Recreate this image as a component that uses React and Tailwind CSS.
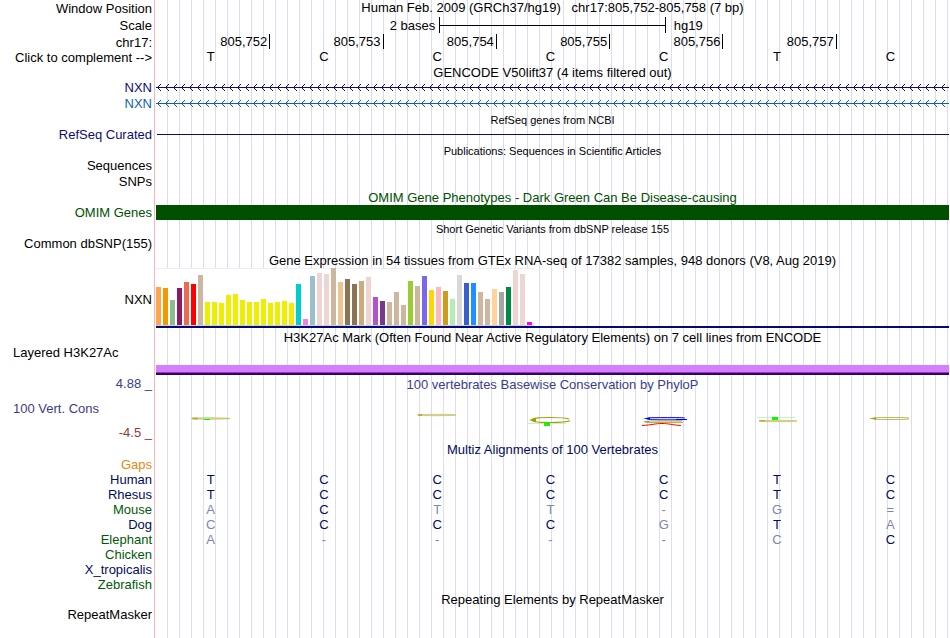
import React from 'react'
import clsx from 'clsx'

const positions = ['805,752', '805,753', '805,754', '805,755', '805,756', '805,757']
const sequence = ['T', 'C', 'C', 'C', 'C', 'T', 'C']

// median expression per tissue: bar height in px and tissue colour
const tissues = [
  [38, '#ffa54f'], [37, '#ee9a00'], [25, '#8fbc8f'], [37, '#8b1c62'], [43, '#ee6a50'], [41, '#ff0000'],
  [50, '#cdb79e'], [23, '#eeee00'], [23, '#eeee00'], [22, '#eeee00'], [30, '#eeee00'], [31, '#eeee00'],
  [25, '#eeee00'], [23, '#eeee00'], [23, '#eeee00'], [26, '#eeee00'], [22, '#eeee00'], [23, '#eeee00'],
  [24, '#eeee00'], [22, '#eeee00'], [41, '#00cdcd'], [6, '#ee82ee'], [49, '#9ac0cd'], [52, '#eed5d2'],
  [51, '#eed5d2'], [57, '#cdb79e'], [43, '#eec591'], [46, '#8b7355'], [41, '#8b7355'], [44, '#cdaa7d'],
  [48, '#eed5d2'], [28, '#b452cd'], [24, '#7a378b'], [23, '#cdb79e'], [33, '#cdb79e'], [20, '#cdb79e'],
  [44, '#9acd32'], [39, '#cdb79e'], [49, '#7a67ee'], [35, '#ffd700'], [38, '#ffb6c1'], [34, '#cd9b1d'],
  [26, '#b4eeb4'], [50, '#d9d9d9'], [42, '#3a5fcd'], [42, '#1e90ff'], [33, '#cdb79e'], [26, '#cdb79e'],
  [36, '#ffd39b'], [33, '#a6a6a6'], [38, '#008b45'], [55, '#eed5d2'], [51, '#eed5d2'], [3, '#ff00ff'],
]

const species = [
  { name: 'Gaps', color: 'text-[#e08a10]', bases: '' },
  { name: 'Human', color: 'text-[#000a64]', bases: 'TCCCCTC' },
  { name: 'Rhesus', color: 'text-[#000a64]', bases: 'TCCCCTC' },
  { name: 'Mouse', color: 'text-[#005a0a]', bases: 'ACTT-G=' },
  { name: 'Dog', color: 'text-[#000a64]', bases: 'CCCCGTA' },
  { name: 'Elephant', color: 'text-[#005a0a]', bases: 'A----CC' },
  { name: 'Chicken', color: 'text-[#005a0a]', bases: '' },
  { name: 'X_tropicalis', color: 'text-[#000a64]', bases: '' },
  { name: 'Zebrafish', color: 'text-[#005a0a]', bases: '' },
]

const Row = ({ label, labelClass, className, children }) => (
  <div className={clsx('grid grid-cols-[156px_minmax(0,1fr)]', className)}>
    <div className={clsx('pr-1 text-right', labelClass)}>{label}</div>
    {children}
  </div>
)

const Title = ({ className, children }) => (
  <h2 className={clsx('ml-[156px] whitespace-pre text-center leading-[14px]', className)}>{children}</h2>
)

const GeneLine = ({ id, color }) => (
  <svg className="h-4 w-full" aria-hidden="true" shapeRendering="crispEdges">
    <defs>
      <pattern id={id} width="8" height="16" patternUnits="userSpaceOnUse">
        <path d="M1 7h1v1h-1zM2 6h1v1h-1zM2 8h1v1h-1zM3 5h1v1h-1zM3 9h1v1h-1zM4 4h1v1h-1zM4 10h1v1h-1z" fill={color} />
      </pattern>
    </defs>
    <rect width="100%" height="16" fill={`url(#${id})`} />
    <rect y="7" width="100%" height="1" fill={color} />
  </svg>
)

// flattened letter stacks of the conservation logo, one per base
const logos = [
  <>
    <ellipse cx="24" cy="10.5" rx="19" ry="0.7" fill="#e6e4a8" stroke="#b4b03c" strokeWidth="0.6" />
    <path d="M4 10.5l2-1h5v2H6z" fill="#b4b03c" />
    <rect x="17" y="11" width="6" height="1" fill="#00ff00" />
  </>,
  null,
  <>
    <ellipse cx="24" cy="7" rx="19" ry="0.7" fill="#e6e4a8" stroke="#b8b448" strokeWidth="0.6" />
    <path d="M4 7l2-1h3v2H6z" fill="#b4b03c" />
  </>,
  <>
    <path d="M43 11C39 9.600 32 9.500 24 9.500S6 9.500 6 12s10 2.500 18 2.500 16 0 20-1.700" fill="none" stroke="#a0a000" strokeWidth="1.200" />
    <path d="M3 12l7-2.200v4.400z" fill="#a0a000" />
    <path d="M2 15.500h38" stroke="#a0f5a0" strokeWidth="0.700" />
    <rect x="18" y="15" width="6" height="3" fill="#00ff00" />
  </>,
  <>
    <path d="M44 9.500H10L4 10.500l6 1.300h34z" fill="#d4d4ff" />
    <path d="M45 10C41 9.300 34 9.500 24 9.500S7 9.500 7 10.500s9 1.300 17 1.300h19" fill="none" stroke="#0000ff" strokeWidth="0.900" />
    <path d="M3 10.500l7-1v2.200zM36 11h11v1H36z" fill="#0000ff" />
    <path d="M42 13H10l-5 .700 5 .900h33" fill="none" stroke="#a8a420" strokeWidth="0.900" />
    <path d="M3 13h6v1.400H6z" fill="#a8a420" />
    <path d="M2 17.500C12 17 15 15.500 22 15.500s10 1.500 19 2" fill="none" stroke="#ff0000" strokeWidth="1" />
  </>,
  <>
    <path d="M4 9.500h38" stroke="#a0f5a0" strokeWidth="0.700" />
    <rect x="19" y="9" width="6" height="3" fill="#00ff00" />
    <ellipse cx="25" cy="13" rx="19" ry="0.700" fill="#e6e4a8" stroke="#b8b448" strokeWidth="0.600" />
    <path d="M6 12h6v1.600H7z" fill="#b4b03c" />
  </>,
  <>
    <path d="M43 10C38 9.300 32 9.500 24 9.500S8 9.500 8 10.500s8 1 16 1 15 0 19-.500" fill="none" stroke="#aaa62c" strokeWidth="0.800" />
    <path d="M3 10.500l7-1.200v2.400z" fill="#a0a000" />
  </>,
]

export default function App() {
  return (
    <main
      className="grid min-h-screen grid-cols-[156px_minmax(0,1fr)] bg-white pr-px text-[13px] leading-[15px] text-black"
      style={{ fontFamily: '"Liberation Sans", Arial, sans-serif' }}
    >
      {/* page guides behind every track */}
      <div className="col-start-1 row-start-1 mr-px border-r border-[#ffb4b4]" />
      <div className="col-start-2 row-start-1 bg-[repeating-linear-gradient(to_right,transparent_0_11px,#dcdcf8_11px_12px)]" />

      <div className="col-span-2 col-start-1 row-start-1">
        <Row label="Window Position" labelClass="self-center" className="h-4">
          <h1 className="whitespace-pre text-center">{'Human Feb. 2009 (GRCh37/hg19)   chr17:805,752-805,758 (7 bp)'}</h1>
        </Row>

        <Row label="Scale" labelClass="self-center" className="h-[18px]">
          <div className="grid grid-cols-[5fr_4fr_5fr] items-center">
            <span className="pr-1 text-right">2 bases</span>
            <div className="flex h-4 items-center border-x border-black">
              <div className="h-px w-full bg-black" />
            </div>
            <span className="pl-2">hg19</span>
          </div>
        </Row>

        <Row label="chr17:" labelClass="self-center" className="h-4">
          <div className="grid grid-cols-7 items-start">
            {positions.map((pos) => (
              <div key={pos} className="-mr-px border-r border-black pr-0.5 text-right">{pos}</div>
            ))}
          </div>
        </Row>

        <Row
          className="h-4"
          label={<button type="button" className="whitespace-nowrap">{'Click to complement -->'}</button>}
        >
          <div className="grid grid-cols-7 leading-[14px]">
            {sequence.map((base, i) => (
              <span key={i} className="pr-1 text-center">{base}</span>
            ))}
          </div>
        </Row>

        <Title>GENCODE V50lift37 (4 items filtered out)</Title>
        <Row label="NXN" labelClass="text-[#0c0c78]" className="h-4">
          <GeneLine id="nxn-coding" color="#0c0c78" />
        </Row>
        <Row label="NXN" labelClass="text-[#0c64b0]" className="h-4">
          <GeneLine id="nxn-other" color="#0c64b0" />
        </Row>

        <Title className="pt-px text-[11px]">RefSeq genes from NCBI</Title>
        <Row label="RefSeq Curated" labelClass="text-[#0c0c78]">
          <div className="ml-px h-px self-center bg-[#0c0c78]" />
        </Row>

        <Title className="pt-0.5 text-[11px]">Publications: Sequences in Scientific Articles</Title>
        <Row label="Sequences" className="h-4" />
        <Row label="SNPs" className="h-4" />

        <Title className="pt-px text-[#005000]">OMIM Gene Phenotypes - Dark Green Can Be Disease-causing</Title>
        <Row label="OMIM Genes" labelClass="text-[#005000]">
          <div className="bg-[#005000]" />
        </Row>

        <Title className="pt-0.5 text-[11px]">Short Genetic Variants from dbSNP release 155</Title>
        <Row label="Common dbSNP(155)" className="h-4" />

        <Title className="pt-0.5">Gene Expression in 54 tissues from GTEx RNA-seq of 17382 samples, 948 donors (V8, Aug 2019)</Title>
        <Row label="NXN" labelClass="self-center" className="h-[62px]">
          <div>
            <div className="flex h-[58px] w-[378px] items-end gap-0.5 border-b border-[#d0d0d0] bg-white shadow-[inset_0_1px_#eeeeee]">
              {tissues.map(([height, color], i) => (
                <div key={i} className="w-[5px] shrink-0" style={{ height, backgroundColor: color }} />
              ))}
            </div>
            <div className="h-0.5 bg-[#000a78]" />
          </div>
        </Row>

        <Title className="pt-px">H3K27Ac Mark (Often Found Near Active Regulatory Elements) on 7 cell lines from ENCODE</Title>
        <div className="grid h-[31px] grid-cols-[156px_minmax(0,1fr)]">
          <div className="pl-[13px]">Layered H3K27Ac</div>
          <div className="mt-5 h-[10px] border-b-2 border-[#14145a] bg-[#d47fff] shadow-[inset_0_-1px_#c81ec8]" />
        </div>

        <Row label="4.88 _" labelClass="text-[#3c3c8c]" className="h-4">
          <h2 className="pt-px text-center text-[#3c3c8c]">100 vertebrates Basewise Conservation by PhyloP</h2>
        </Row>
        <div className="grid h-[51px] grid-cols-[156px_minmax(0,1fr)]">
          <div className="flex flex-col justify-between pb-[3px] pt-[9px]">
            <span className="pl-[13px] text-[#3c3c8c]">100 Vert. Cons</span>
            <span className="pr-1 text-right text-[#8c3c3c]">-4.5 _</span>
          </div>
          <div className="grid grid-cols-7 pt-4">
            {logos.map((logo, i) => (
              <div key={i} className="flex justify-center pr-1">
                <svg className="h-5 w-12" viewBox="0 0 48 20" aria-hidden="true">{logo}</svg>
              </div>
            ))}
          </div>
        </div>

        <Title className="text-[#000a64]">Multiz Alignments of 100 Vertebrates</Title>
        <table className="w-full table-fixed border-collapse">
          <tbody>
            {species.map(({ name, color, bases }) => (
              <tr key={name} className="h-[15px]">
                <th scope="row" className={clsx('w-[156px] p-0 pr-1 text-right font-normal', color)}>{name}</th>
                {sequence.map((ref, i) => (
                  <td
                    key={i}
                    className={clsx('p-0 pr-1 text-center', bases[i] === ref ? 'text-[#000a64]' : 'text-[#8085b2]')}
                  >
                    {bases[i]}
                  </td>
                ))}
              </tr>
            ))}
          </tbody>
        </table>

        <Title className="pt-px">Repeating Elements by RepeatMasker</Title>
        <Row label="RepeatMasker" />
      </div>
    </main>
  )
}
